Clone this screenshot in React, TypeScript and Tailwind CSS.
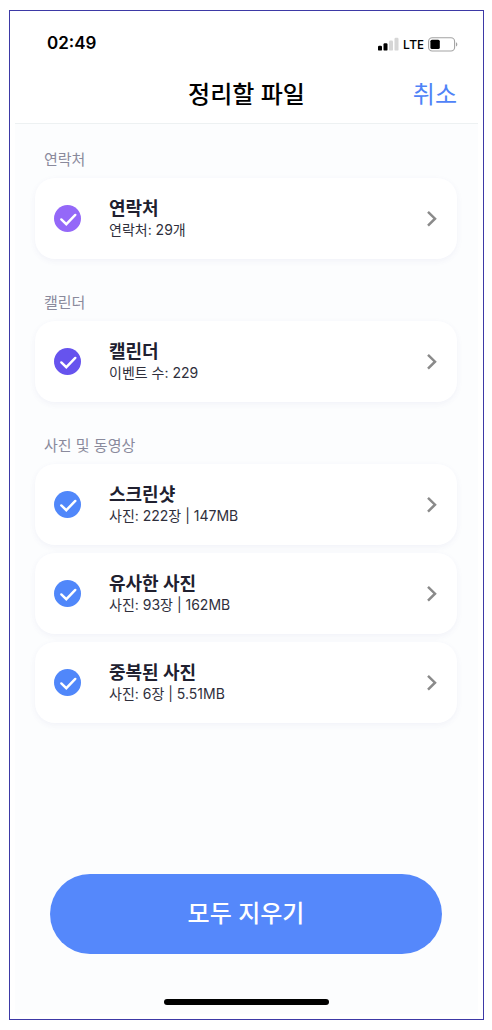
import { useState } from "react";

type Item = { id: string; title: string; detail: string; tone: string };
type Section = { label: string; items: Item[] };

const sections: Section[] = [
  {
    label: "연락처",
    items: [{ id: "contacts", title: "연락처", detail: "연락처: 29개", tone: "checked:bg-[#9468f8]" }],
  },
  {
    label: "캘린더",
    items: [{ id: "calendar", title: "캘린더", detail: "이벤트 수: 229", tone: "checked:bg-[#6653ee]" }],
  },
  {
    label: "사진 및 동영상",
    items: [
      { id: "screenshots", title: "스크린샷", detail: "사진: 222장 | 147MB", tone: "checked:bg-[#5087fa]" },
      { id: "similar", title: "유사한 사진", detail: "사진: 93장 | 162MB", tone: "checked:bg-[#5087fa]" },
      { id: "duplicates", title: "중복된 사진", detail: "사진: 6장 | 5.51MB", tone: "checked:bg-[#5087fa]" },
    ],
  },
];

function StatusBar() {
  return (
    <div className="flex h-14 items-center justify-between pr-5 pl-8">
      <span className="text-[17px] font-semibold text-black">02:49</span>
      <div className="flex items-center gap-1">
        <svg width="21" height="14" viewBox="0 0 21 14" aria-hidden="true">
          <rect x="0" y="8.8" width="4" height="4.8" rx="1.2" fill="#000" />
          <rect x="5.5" y="6.2" width="4" height="7.4" rx="1.2" fill="#000" />
          <rect x="11" y="3.6" width="4" height="10" rx="1.2" fill="#d6d6d6" />
          <rect x="16.5" y="0.8" width="4" height="12.8" rx="1.2" fill="#d6d6d6" />
        </svg>
        <span className="font-['Noto_Sans',sans-serif] text-[13px] leading-4 font-medium text-black">LTE</span>
        <svg width="30" height="15" viewBox="0 0 30 15" aria-hidden="true">
          <rect x="0.6" y="0.8" width="26" height="13.2" rx="3.6" fill="none" stroke="#a3a3a3" strokeWidth="1.1" />
          <rect x="2.4" y="2.7" width="9.4" height="9.4" rx="1.6" fill="#000" />
          <path d="M28 5.3c1.8.6 1.8 3.6 0 4.2z" fill="#a3a3a3" />
        </svg>
      </div>
    </div>
  );
}

function Row({ item }: { item: Item }) {
  const [checked, setChecked] = useState(true);
  return (
    <li className="flex h-[81px] items-center rounded-[20px] bg-white px-[19px] shadow-[0_2px_6px_rgba(70,70,150,0.06)]">
      <span className="relative size-[27px] shrink-0">
        <input
          id={item.id}
          type="checkbox"
          checked={checked}
          onChange={(e) => setChecked(e.target.checked)}
          className={`block size-[27px] appearance-none rounded-full bg-[#d5d8e2] ${item.tone}`}
        />
        <svg className="pointer-events-none absolute inset-0" width="27" height="27" viewBox="0 0 27 27" fill="none" aria-hidden="true">
          <path d="M7.3 14.4l5 4.8L21.3 9.9" stroke="#fff" strokeWidth="2.4" strokeLinecap="round" strokeLinejoin="miter" />
        </svg>
      </span>
      <label htmlFor={item.id} className="ml-7 flex grow flex-col">
        <span className="text-[18px] leading-[22px] font-bold text-[#20202f]">{item.title}</span>
        <span className="text-[14px] leading-5 text-[#2f2f3c]">{item.detail}</span>
      </label>
      <button type="button" aria-label={`${item.title} 열기`} className="-mr-1 flex size-8 items-center justify-end">
        <svg width="20" height="20" viewBox="0 0 20 20" fill="none" aria-hidden="true">
          <path d="M6 2.8L13 9.7l-7 6.9" stroke="#8a8a8a" strokeWidth="2.5" />
        </svg>
      </button>
    </li>
  );
}

export default function App() {
  return (
    <div className="flex min-h-screen flex-col bg-white pt-[10px] pr-2 pb-[10px] pl-[9px] font-['Inter','Noto_Sans_CJK_KR',sans-serif]">
      <div className="flex grow flex-col border border-[#3d39a6] bg-white p-[5px]">
        <StatusBar />
        <header className="grid h-[52px] grid-cols-[1fr_auto_1fr] items-center border-b border-[#edf1f2] px-[21px]">
          <h1 className="col-start-2 pb-[6px] text-[24px] leading-8 font-medium text-black">정리할 파일</h1>
          <button type="button" className="justify-self-end pb-[6px] text-[24px] leading-8 text-[#4f83f7]">
            취소
          </button>
        </header>
        <main className="flex grow flex-col bg-[#fcfdfe] pr-[21px] pl-5">
          {sections.map((section) => (
            <section key={section.label} className="pt-[26px] last-of-type:pb-8 not-first:pt-[34px]">
              <h2 className="mb-2 pl-[9px] text-[15px] leading-5 text-[#8a8a9c]">{section.label}</h2>
              <ul className="flex flex-col gap-2">
                {section.items.map((item) => (
                  <Row key={item.id} item={item} />
                ))}
              </ul>
            </section>
          ))}
          <div className="mt-auto px-[15px]">
            <button type="button" className="h-20 w-full rounded-full bg-[#5588fb] text-[24px] font-medium text-white">
              모두 지우기
            </button>
          </div>
          <div className="mx-auto mt-[45px] mb-[9px] h-[6px] w-[165px] rounded-full bg-black" />
        </main>
      </div>
    </div>
  );
}
